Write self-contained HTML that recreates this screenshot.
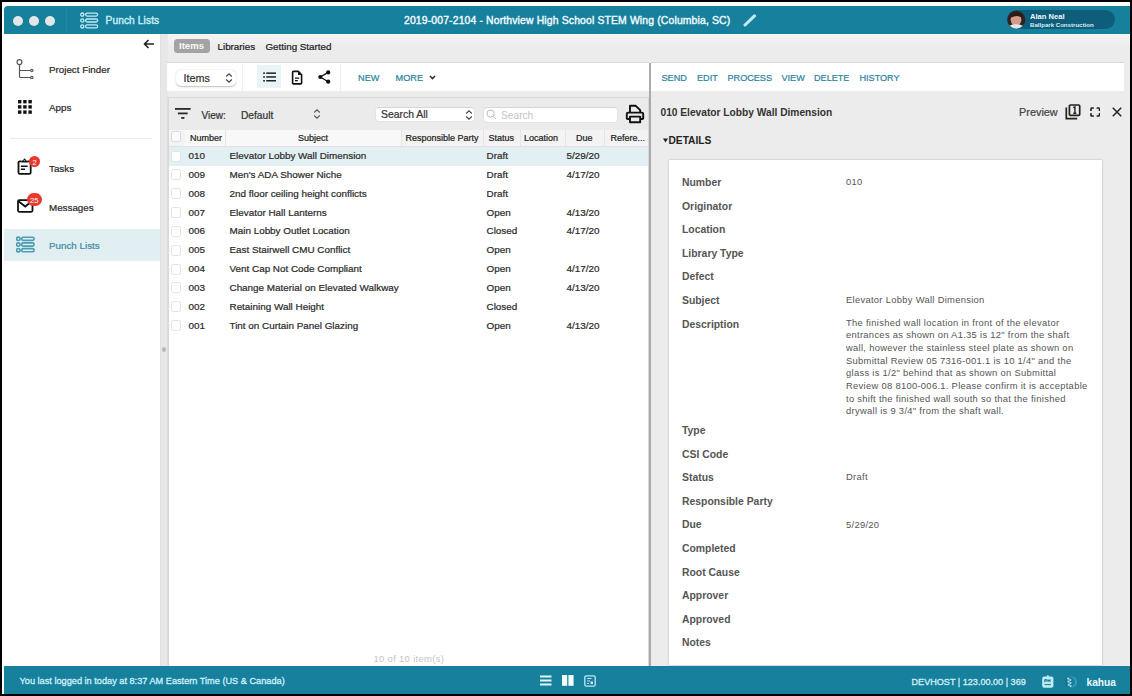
<!DOCTYPE html>
<html><head><meta charset="utf-8">
<style>
*{margin:0;padding:0;box-sizing:border-box}
html,body{width:1132px;height:696px;overflow:hidden;background:#000;font-family:"Liberation Sans",sans-serif;}
.a{position:absolute}
.t{position:absolute;white-space:nowrap;line-height:1;-webkit-text-stroke:0.22px}
.t.b{-webkit-text-stroke:0}
#win{position:absolute;left:2px;top:2px;width:1128px;height:692px;background:#fff;overflow:hidden}
#hdr{position:absolute;z-index:2;left:1.5px;top:4px;width:1126.5px;height:27.5px;background:#17809d;border-radius:4px 0 0 0}
#ftr{position:absolute;left:1.5px;top:664px;width:1126.5px;height:27.5px;background:#17809d}
#side{position:absolute;left:1.5px;top:31px;width:156px;height:633px;background:#fff}
#main{position:absolute;left:158px;top:31px;width:970px;height:633px;background:linear-gradient(#f6f6f6 0px,#ececec 14px,#ececec 100%)}
</style></head><body>
<div id="win">
  <div id="hdr">
    <div class="a" style="left:9.5px;top:9.5px;width:10px;height:10px;border-radius:50%;background:#dfe7e9"></div>
    <div class="a" style="left:25.3px;top:9.5px;width:10px;height:10px;border-radius:50%;background:#dfe7e9"></div>
    <div class="a" style="left:41px;top:9.5px;width:10px;height:10px;border-radius:50%;background:#dfe7e9"></div>
    <div class="a" style="left:62px;top:0;width:1px;height:27px;background:#1f8aa6"></div>
    <svg class="a" style="left:76.8px;top:5.5px" width="19" height="17" viewBox="0 0 19 17"><g fill="none" stroke="#bfeaf5" stroke-width="1.3"><circle cx="2.3" cy="2.6" r="1.6"/><rect x="5.6" y="1.1" width="12" height="3" rx="1.5"/><circle cx="2.3" cy="8.5" r="1.6"/><rect x="5.6" y="7" width="12" height="3" rx="1.5"/><circle cx="2.3" cy="14.4" r="1.6"/><rect x="5.6" y="12.9" width="12" height="3" rx="1.5"/></g></svg>
    <div class="t" style="left:102px;top:10px;font-size:10.2px;color:#c6eef8;letter-spacing:0.1px;-webkit-text-stroke:0.4px #c6eef8">Punch Lists</div>
    <div class="t" style="left:400.5px;top:10px;font-size:10.4px;color:#f0fafd;letter-spacing:0.15px;-webkit-text-stroke:0.4px #f0fafd">2019-007-2104 - Northview High School STEM Wing (Columbia, SC)</div>
    <svg class="a" style="left:739px;top:8px" width="14" height="13" viewBox="0 0 14 13"><path d="M2 11L11.5 1.8" stroke="#bfeaf5" stroke-width="3" stroke-linecap="round"/></svg>
    <div class="a" style="left:1003.5px;top:3.5px;width:108px;height:19.5px;border-radius:10px;background:#0e5d7b"></div>
    <svg class="a" style="left:1003.5px;top:3.5px" width="19" height="19.5" viewBox="0 0 19 19.5"><defs><clipPath id="av"><circle cx="9.3" cy="9.75" r="9"/></clipPath></defs><g clip-path="url(#av)"><rect width="19" height="19.5" fill="#2e211e"/><ellipse cx="9" cy="9.6" rx="5.4" ry="6.2" fill="#d39a86"/><path d="M3 5.5Q8 0.5 15.5 4.5L15 7.5Q10 4.5 4 7.5Z" fill="#2a1a16"/><ellipse cx="9" cy="19.2" rx="9.5" ry="5" fill="#dfe6ec"/></g></svg>
    <div class="t b" style="left:1026.5px;top:7px;font-size:7.6px;font-weight:bold;color:#eef8fb">Alan Neal</div>
    <div class="t b" style="left:1026.5px;top:16px;font-size:6.1px;font-weight:bold;color:#d8eef5">Ballpark Construction</div>
  </div>
  <div id="side">
    <svg class="a" style="left:139px;top:5.5px" width="12" height="10" viewBox="0 0 12 10"><path d="M11 5H1.5M5.5 1L1.5 5L5.5 9" fill="none" stroke="#222" stroke-width="1.6"/></svg>
    <svg class="a" style="left:12.5px;top:24.5px" width="19" height="21" viewBox="0 0 19 21"><g fill="none" stroke="#555" stroke-width="1.15"><circle cx="3.5" cy="4.1" r="2.5"/><path d="M3.5 6.6V18.8Q3.5 19.5 4.2 19.5H14.6M3.5 12.5H14.6"/><circle cx="15.8" cy="12.5" r="1.2"/><circle cx="15.8" cy="19.5" r="1.2"/></g></svg>
    <div class="t" style="left:45.5px;top:32px;font-size:9.8px;color:#2a2a2a">Project Finder</div>
    <svg class="a" style="left:14.5px;top:67px" width="14" height="14" viewBox="0 0 14 14"><g fill="#111"><rect x="0" y="0" width="3.4" height="3.4"/><rect x="5.2" y="0" width="3.4" height="3.4"/><rect x="10.4" y="0" width="3.4" height="3.4"/><rect x="0" y="5.2" width="3.4" height="3.4"/><rect x="5.2" y="5.2" width="3.4" height="3.4"/><rect x="10.4" y="5.2" width="3.4" height="3.4"/><rect x="0" y="10.4" width="3.4" height="3.4"/><rect x="5.2" y="10.4" width="3.4" height="3.4"/><rect x="10.4" y="10.4" width="3.4" height="3.4"/></g></svg>
    <div class="t" style="left:45.5px;top:70px;font-size:9.8px;color:#2a2a2a">Apps</div>
    <div class="a" style="left:6px;top:104.5px;width:142px;height:1px;background:#ececec"></div>
    <svg class="a" style="left:13.5px;top:125px" width="16" height="17" viewBox="0 0 16 17"><g fill="none" stroke="#111" stroke-width="1.8"><path d="M4.6 3.4H2.9Q1.5 3.4 1.5 4.8V14.4Q1.5 15.8 2.9 15.8H12.3Q13.7 15.8 13.7 14.4V4.8Q13.7 3.4 12.3 3.4H10.6"/><path d="M3.9 8.3H10.6M3.9 11.2H8" stroke-width="1.5"/></g><path d="M4.4 4.6V3.4Q4.4 2.4 5.4 2.4H6.2Q6.6 0.6 7.6 0.6Q8.6 0.6 9 2.4H9.8Q10.8 2.4 10.8 3.4V4.6Z" fill="#111"/><circle cx="7.6" cy="2.6" r="0.7" fill="#8aa"/></svg>
    <div class="a" style="left:25.6px;top:123px;width:11px;height:11px;border-radius:50%;background:#e8392f"></div>
    <div class="t" style="left:25.6px;top:126px;width:11px;text-align:center;font-size:7.6px;color:#fff;-webkit-text-stroke:0">2</div>
    <div class="t" style="left:45.5px;top:131px;font-size:9.8px;color:#2a2a2a">Tasks</div>
    <svg class="a" style="left:13.5px;top:166px" width="17" height="14" viewBox="0 0 17 14"><g fill="none" stroke="#111" stroke-width="1.8"><rect x="1" y="1.2" width="14.5" height="11.6" rx="1.2"/><path d="M1.2 2L8.2 7.5L15.3 2"/></g></svg>
    <div class="a" style="left:23.2px;top:160.3px;width:15.6px;height:13px;border-radius:7px;background:#e8392f"></div>
    <div class="t" style="left:23px;top:164px;width:15.6px;text-align:center;font-size:7.6px;color:#fff;-webkit-text-stroke:0">25</div>
    <div class="t" style="left:45.5px;top:170px;font-size:9.8px;color:#2a2a2a">Messages</div>
    <div class="a" style="left:0;top:195.5px;width:156px;height:32.5px;background:#e1eff3"></div>
    <svg class="a" style="left:12px;top:203px" width="19" height="17" viewBox="0 0 19 17"><g fill="none" stroke="#4c9cb3" stroke-width="1.6"><circle cx="2.3" cy="2.8" r="1.7"/><rect x="5.6" y="1.2" width="12.5" height="3.2" rx="1.6"/><circle cx="2.3" cy="8.5" r="1.7"/><rect x="5.6" y="6.9" width="12.5" height="3.2" rx="1.6"/><circle cx="2.3" cy="14.2" r="1.7"/><rect x="5.6" y="12.6" width="12.5" height="3.2" rx="1.6"/></g></svg>
    <div class="t" style="left:45.5px;top:208px;font-size:9.8px;color:#3f8ba1">Punch Lists</div>
  </div>
  <div id="main"></div>
  <div class="a" style="left:-2px;top:-2px;width:1132px;height:696px">
    <!-- splitter -->
    <div class="a" style="left:159.5px;top:33.5px;width:1px;height:632.5px;background:#e0e0e0"></div>
    <div class="a" style="left:160.5px;top:33.5px;width:7px;height:632.5px;background:#e7e7e7"></div>
    <div class="a" style="left:166.5px;top:97px;width:1px;height:569px;background:#dcdcdc"></div>
    <div class="a" style="left:161.5px;top:347px;width:4px;height:5px;border-radius:50%;background:#b8b8b8"></div>
    <!-- tabs -->
    <div class="a" style="left:173.5px;top:38.8px;width:36px;height:13.8px;border-radius:3.5px;background:#a3a3a3"></div>
    <div class="t b" style="left:179px;top:41px;font-size:9.6px;font-weight:bold;color:#f6f8f6">Items</div>
    <div class="t" style="left:217.5px;top:42px;font-size:9.8px;color:#222">Libraries</div>
    <div class="t" style="left:265.5px;top:42px;font-size:9.8px;color:#222">Getting Started</div>
    <!-- left toolbar -->
    <div class="a" style="left:167px;top:62px;width:482px;height:29px;background:#fff;border-top:1.5px solid #d9d9d9"></div>
    <div class="a" style="left:176px;top:69.5px;width:60px;height:16px;border-radius:5px;background:#fff;box-shadow:0 0.5px 1.5px rgba(0,0,0,0.25)"></div>
    <div class="t" style="left:183.5px;top:73px;font-size:10.8px;color:#333">Items</div>
    <svg class="a" style="left:225px;top:71.5px" width="8" height="12" viewBox="0 0 8 12"><path d="M1.2 4.5L4 1.8L6.8 4.5M1.2 7.5L4 10.2L6.8 7.5" fill="none" stroke="#444" stroke-width="1.2"/></svg>
    <div class="a" style="left:241.5px;top:63.5px;width:1px;height:27px;background:#efefef"></div>
    <div class="a" style="left:256.5px;top:64.5px;width:24.5px;height:23.5px;background:#e9f4f6"></div>
    <svg class="a" style="left:262.5px;top:72px" width="14" height="10" viewBox="0 0 14 10"><g fill="#222"><rect x="0.2" y="0.4" width="1.7" height="1.6"/><rect x="3.2" y="0.4" width="9.8" height="1.5"/><rect x="0.2" y="4.2" width="1.7" height="1.6"/><rect x="3.2" y="4.2" width="9.8" height="1.5"/><rect x="0.2" y="8" width="1.7" height="1.6"/><rect x="3.2" y="8" width="9.8" height="1.5"/></g></svg>
    <svg class="a" style="left:291px;top:69.5px" width="12" height="15" viewBox="0 0 12 15"><g fill="none" stroke="#111" stroke-width="1.6" stroke-linejoin="round"><path d="M1.6 2.4Q1.6 1.4 2.6 1.4H7.3L10.6 4.8V12.9Q10.6 13.9 9.6 13.9H2.6Q1.6 13.9 1.6 12.9Z"/><path d="M4 8.1H8.2M4 10.6H6.8" stroke-width="1.3"/></g><path d="M7 1.4L10.6 5H7Z" fill="#111"/></svg>
    <svg class="a" style="left:318px;top:70px" width="13" height="14" viewBox="0 0 13 14"><g fill="#111"><circle cx="10.2" cy="2.4" r="2.1"/><circle cx="2.3" cy="7" r="2.1"/><circle cx="10.2" cy="11.7" r="2.1"/></g><path d="M10.2 2.4L2.3 7L10.2 11.7" fill="none" stroke="#111" stroke-width="1.3"/></svg>
    <div class="a" style="left:340px;top:63.5px;width:1px;height:27px;background:#efefef"></div>
    <div class="t" style="left:358px;top:74px;font-size:9.2px;color:#2b849d">NEW</div>
    <div class="t" style="left:395.5px;top:74px;font-size:9.2px;color:#2b849d">MORE</div>
    <svg class="a" style="left:429px;top:75px" width="7" height="5" viewBox="0 0 7 5"><path d="M1 1L3.5 3.6L6 1" fill="none" stroke="#333" stroke-width="1.6"/></svg>
    <!-- divider -->
    <div class="a" style="left:648.8px;top:63px;width:1.8px;height:603px;background:#aaaaaa"></div>
    <!-- right toolbar -->
    <div class="a" style="left:651px;top:62px;width:473px;height:29px;background:#fff;border-top:1.5px solid #d9d9d9"></div>
    <div class="t" style="left:661.5px;top:74px;font-size:9.1px;color:#2b849d">SEND</div>
    <div class="t" style="left:697px;top:74px;font-size:9.1px;color:#2b849d">EDIT</div>
    <div class="t" style="left:727.5px;top:74px;font-size:9.1px;color:#2b849d">PROCESS</div>
    <div class="t" style="left:781.5px;top:74px;font-size:9.1px;color:#2b849d">VIEW</div>
    <div class="t" style="left:814px;top:74px;font-size:9.1px;color:#2b849d">DELETE</div>
    <div class="t" style="left:859.5px;top:74px;font-size:9.1px;color:#2b849d">HISTORY</div>
    <!-- grid panel -->
    <div class="a" style="left:167.5px;top:97px;width:481px;height:569px;background:#fff;border:1px solid #d8d8d8;border-bottom:none"></div>
    <div class="a" style="left:168.5px;top:98px;width:479.5px;height:31.5px;background:#ebebeb"></div>
    <svg class="a" style="left:175px;top:107.8px" width="16" height="11" viewBox="0 0 16 11"><g fill="#2a2a2a"><rect x="0" y="0" width="15.6" height="1.8"/><rect x="2.9" y="4.5" width="9.8" height="1.8"/><rect x="6.2" y="9" width="3.2" height="1.8"/></g></svg>
    <svg class="a" style="left:312.5px;top:108px" width="8" height="12" viewBox="0 0 8 12"><path d="M1.2 4.5L4 1.8L6.8 4.5M1.2 7.5L4 10.2L6.8 7.5" fill="none" stroke="#555" stroke-width="1.1"/></svg>
    <div class="a" style="left:374.5px;top:106.5px;width:100px;height:15.5px;border-radius:4px;background:#fff;border:1px solid #e4e4e4;border-top-color:#d6d6d6"></div>
    <svg class="a" style="left:465px;top:108.5px" width="8" height="12" viewBox="0 0 8 12"><path d="M1.2 4.5L4 1.8L6.8 4.5M1.2 7.5L4 10.2L6.8 7.5" fill="none" stroke="#444" stroke-width="1.1"/></svg>
    <div class="a" style="left:482.5px;top:106.5px;width:135.5px;height:16px;border-radius:4px;background:#fff;border:1px solid #e2e2e2;border-top-color:#d6d6d6"></div>
    <svg class="a" style="left:486px;top:109px" width="11" height="11" viewBox="0 0 11 11"><g fill="none" stroke="#bbb" stroke-width="1"><circle cx="4.6" cy="4.6" r="3.6"/><path d="M7.2 7.2L10 10"/></g></svg>
    <svg class="a" style="left:624.5px;top:103.5px" width="20" height="20" viewBox="0 0 20 20"><g fill="none" stroke="#111" stroke-width="1.9" stroke-linejoin="round"><path d="M5 8.6V1.8H10.8L15.2 6.2V8.6"/><path d="M4.4 15H2.6Q1.8 15 1.8 14.2V10Q1.8 8.6 3.2 8.6H16.8Q18.2 8.6 18.2 10V14.2Q18.2 15 17.4 15H15.6"/><rect x="5" y="12.6" width="10.2" height="5.6"/></g></svg>
    <!-- column header -->
    <div class="a" style="left:168.5px;top:129.5px;width:479.5px;height:17px;background:#f3f3f3;border-bottom:1px solid #e2e2e2"></div>
    <div class="a" style="left:185px;top:130px;width:40px;height:16px;background:#f8f8f8"></div>
    <div class="a" style="left:225.5px;top:130px;width:175px;height:16px;background:#f8f8f8"></div>
    <div class="a" style="left:171px;top:131px;width:10px;height:11px;border:1px solid #dcdcdc;border-radius:2px;background:#fafafa"></div>
    <div class="t" style="left:201.5px;top:111.00px;font-size:10px;color:#333">View:</div>
    <div class="t" style="left:241px;top:111.00px;font-size:10.2px;color:#333">Default</div>
    <div class="t" style="left:381px;top:110.00px;font-size:10.4px;color:#333">Search All</div>
    <div class="t" style="left:501px;top:111.00px;font-size:10.2px;color:#c4c4c4;-webkit-text-stroke:0">Search</div>
    <div class="t" style="left:190px;top:134.00px;font-size:9px;color:#222">Number</div>
    <div class="t" style="left:298px;top:134.00px;font-size:9px;color:#222">Subject</div>
    <div class="t" style="left:405.5px;top:134.00px;font-size:9px;color:#222">Responsible Party</div>
    <div class="t" style="left:488.5px;top:134.00px;font-size:9px;color:#222">Status</div>
    <div class="t" style="left:524px;top:134.00px;font-size:9px;color:#222">Location</div>
    <div class="t" style="left:576px;top:134.00px;font-size:9px;color:#222">Due</div>
    <div class="t" style="left:610.5px;top:134.00px;font-size:9px;color:#222">Refere...</div>
    <div class="a" style="left:225px;top:130px;width:1px;height:16px;background:#e4e4e4"></div>
    <div class="a" style="left:400.5px;top:130px;width:1px;height:16px;background:#e4e4e4"></div>
    <div class="a" style="left:482.5px;top:130px;width:1px;height:16px;background:#e4e4e4"></div>
    <div class="a" style="left:519.5px;top:130px;width:1px;height:16px;background:#e4e4e4"></div>
    <div class="a" style="left:564.5px;top:130px;width:1px;height:16px;background:#e4e4e4"></div>
    <div class="a" style="left:604px;top:130px;width:1px;height:16px;background:#e4e4e4"></div>
    <div class="a" style="left:168.5px;top:147px;width:479.5px;height:18.5px;background:#e3f0f3"></div>
    <div class="a" style="left:171px;top:150.60px;width:10px;height:11px;border:1px solid #e2e2e2;border-radius:2.5px;background:#fff"></div>
    <div class="t" style="left:188.5px;top:151.00px;font-size:9.9px;color:#2b2b2b">010</div>
    <div class="t" style="left:229.5px;top:151.00px;font-size:9.9px;color:#2b2b2b">Elevator Lobby Wall Dimension</div>
    <div class="t" style="left:486.5px;top:151.00px;font-size:9.9px;color:#2b2b2b">Draft</div>
    <div class="t" style="left:566.5px;top:151.00px;font-size:9.9px;color:#2b2b2b">5/29/20</div>
    <div class="a" style="left:171px;top:169.44px;width:10px;height:11px;border:1px solid #e2e2e2;border-radius:2.5px;background:#fff"></div>
    <div class="t" style="left:188.5px;top:170.00px;font-size:9.9px;color:#2b2b2b">009</div>
    <div class="t" style="left:229.5px;top:170.00px;font-size:9.9px;color:#2b2b2b">Men's ADA Shower Niche</div>
    <div class="t" style="left:486.5px;top:170.00px;font-size:9.9px;color:#2b2b2b">Draft</div>
    <div class="t" style="left:566.5px;top:170.00px;font-size:9.9px;color:#2b2b2b">4/17/20</div>
    <div class="a" style="left:171px;top:188.28px;width:10px;height:11px;border:1px solid #e2e2e2;border-radius:2.5px;background:#fff"></div>
    <div class="t" style="left:188.5px;top:189.00px;font-size:9.9px;color:#2b2b2b">008</div>
    <div class="t" style="left:229.5px;top:189.00px;font-size:9.9px;color:#2b2b2b">2nd floor ceiling height conflicts</div>
    <div class="t" style="left:486.5px;top:189.00px;font-size:9.9px;color:#2b2b2b">Draft</div>
    <div class="a" style="left:171px;top:207.12px;width:10px;height:11px;border:1px solid #e2e2e2;border-radius:2.5px;background:#fff"></div>
    <div class="t" style="left:188.5px;top:208.00px;font-size:9.9px;color:#2b2b2b">007</div>
    <div class="t" style="left:229.5px;top:208.00px;font-size:9.9px;color:#2b2b2b">Elevator Hall Lanterns</div>
    <div class="t" style="left:486.5px;top:208.00px;font-size:9.9px;color:#2b2b2b">Open</div>
    <div class="t" style="left:566.5px;top:208.00px;font-size:9.9px;color:#2b2b2b">4/13/20</div>
    <div class="a" style="left:171px;top:225.96px;width:10px;height:11px;border:1px solid #e2e2e2;border-radius:2.5px;background:#fff"></div>
    <div class="t" style="left:188.5px;top:226.00px;font-size:9.9px;color:#2b2b2b">006</div>
    <div class="t" style="left:229.5px;top:226.00px;font-size:9.9px;color:#2b2b2b">Main Lobby Outlet Location</div>
    <div class="t" style="left:486.5px;top:226.00px;font-size:9.9px;color:#2b2b2b">Closed</div>
    <div class="t" style="left:566.5px;top:226.00px;font-size:9.9px;color:#2b2b2b">4/17/20</div>
    <div class="a" style="left:171px;top:244.80px;width:10px;height:11px;border:1px solid #e2e2e2;border-radius:2.5px;background:#fff"></div>
    <div class="t" style="left:188.5px;top:245.00px;font-size:9.9px;color:#2b2b2b">005</div>
    <div class="t" style="left:229.5px;top:245.00px;font-size:9.9px;color:#2b2b2b">East Stairwell CMU Conflict</div>
    <div class="t" style="left:486.5px;top:245.00px;font-size:9.9px;color:#2b2b2b">Open</div>
    <div class="a" style="left:171px;top:263.64px;width:10px;height:11px;border:1px solid #e2e2e2;border-radius:2.5px;background:#fff"></div>
    <div class="t" style="left:188.5px;top:264.00px;font-size:9.9px;color:#2b2b2b">004</div>
    <div class="t" style="left:229.5px;top:264.00px;font-size:9.9px;color:#2b2b2b">Vent Cap Not Code Compliant</div>
    <div class="t" style="left:486.5px;top:264.00px;font-size:9.9px;color:#2b2b2b">Open</div>
    <div class="t" style="left:566.5px;top:264.00px;font-size:9.9px;color:#2b2b2b">4/17/20</div>
    <div class="a" style="left:171px;top:282.48px;width:10px;height:11px;border:1px solid #e2e2e2;border-radius:2.5px;background:#fff"></div>
    <div class="t" style="left:188.5px;top:283.00px;font-size:9.9px;color:#2b2b2b">003</div>
    <div class="t" style="left:229.5px;top:283.00px;font-size:9.9px;color:#2b2b2b">Change Material on Elevated Walkway</div>
    <div class="t" style="left:486.5px;top:283.00px;font-size:9.9px;color:#2b2b2b">Open</div>
    <div class="t" style="left:566.5px;top:283.00px;font-size:9.9px;color:#2b2b2b">4/13/20</div>
    <div class="a" style="left:171px;top:301.32px;width:10px;height:11px;border:1px solid #e2e2e2;border-radius:2.5px;background:#fff"></div>
    <div class="t" style="left:188.5px;top:302.00px;font-size:9.9px;color:#2b2b2b">002</div>
    <div class="t" style="left:229.5px;top:302.00px;font-size:9.9px;color:#2b2b2b">Retaining Wall Height</div>
    <div class="t" style="left:486.5px;top:302.00px;font-size:9.9px;color:#2b2b2b">Closed</div>
    <div class="a" style="left:171px;top:320.16px;width:10px;height:11px;border:1px solid #e2e2e2;border-radius:2.5px;background:#fff"></div>
    <div class="t" style="left:188.5px;top:321.00px;font-size:9.9px;color:#2b2b2b">001</div>
    <div class="t" style="left:229.5px;top:321.00px;font-size:9.9px;color:#2b2b2b">Tint on Curtain Panel Glazing</div>
    <div class="t" style="left:486.5px;top:321.00px;font-size:9.9px;color:#2b2b2b">Open</div>
    <div class="t" style="left:566.5px;top:321.00px;font-size:9.9px;color:#2b2b2b">4/13/20</div>
    <div class="t" style="left:373.5px;top:654.00px;font-size:9.4px;color:#c4c4c4;letter-spacing:0.35px;-webkit-text-stroke:0">10 of 10 item(s)</div>
<!-- right panel -->
    <div class="a" style="left:651px;top:91px;width:479px;height:575px;background:#ececec"></div>
    <svg class="a" style="left:1064.5px;top:104px" width="16" height="16" viewBox="0 0 16 16"><g fill="none" stroke="#222" stroke-width="1.7"><rect x="4.4" y="1" width="10.3" height="10.3" rx="1"/><path d="M1.3 3.6V14.7H12.2"/></g><path d="M8.3 3.6L9.9 2.8V9.2M8.3 9.2H11.3" fill="none" stroke="#222" stroke-width="1.4"/></svg>
    <svg class="a" style="left:1089.5px;top:106.5px" width="10.5" height="10" viewBox="0 0 10.5 10"><g fill="none" stroke="#222" stroke-width="1.7" stroke-linecap="round"><path d="M1 3.2V1.8Q1 1 1.8 1H3.2M7.3 1H8.7Q9.5 1 9.5 1.8V3.2M9.5 6.8V8.2Q9.5 9 8.7 9H7.3M3.2 9H1.8Q1 9 1 8.2V6.8"/></g></svg>
    <svg class="a" style="left:1111.5px;top:107px" width="10" height="10" viewBox="0 0 10 10"><path d="M0.8 0.8L9.2 9.2M9.2 0.8L0.8 9.2" fill="none" stroke="#222" stroke-width="1.5"/></svg>
    <svg class="a" style="left:662.5px;top:137.5px" width="5" height="5" viewBox="0 0 5 5"><path d="M0 0.5H5L2.5 4.6Z" fill="#222"/></svg>
    <div class="a" style="left:668.5px;top:159.5px;width:433px;height:505px;background:#fff;box-shadow:0 0 2px rgba(0,0,0,0.25)"></div>
    <div class="t b" style="left:660.5px;top:108.00px;font-size:10.2px;color:#333;font-weight:bold">010 Elevator Lobby Wall Dimension</div>
    <div class="t" style="left:1019px;top:107.00px;font-size:10.9px;color:#444">Preview</div>
    <div class="t b" style="left:668.5px;top:136.00px;font-size:10.2px;color:#222;font-weight:bold">DETAILS</div>
    <div class="t b" style="left:682px;top:178.00px;font-size:10.4px;color:#555;font-weight:bold">Number</div>
    <div class="t b" style="left:682px;top:202.00px;font-size:10.4px;color:#555;font-weight:bold">Originator</div>
    <div class="t b" style="left:682px;top:225.00px;font-size:10.4px;color:#555;font-weight:bold">Location</div>
    <div class="t b" style="left:682px;top:249.00px;font-size:10.4px;color:#555;font-weight:bold">Library Type</div>
    <div class="t b" style="left:682px;top:272.00px;font-size:10.4px;color:#555;font-weight:bold">Defect</div>
    <div class="t b" style="left:682px;top:296.00px;font-size:10.4px;color:#555;font-weight:bold">Subject</div>
    <div class="t b" style="left:682px;top:320.00px;font-size:10.4px;color:#555;font-weight:bold">Description</div>
    <div class="t b" style="left:682px;top:426.00px;font-size:10.4px;color:#555;font-weight:bold">Type</div>
    <div class="t b" style="left:682px;top:450.00px;font-size:10.4px;color:#555;font-weight:bold">CSI Code</div>
    <div class="t b" style="left:682px;top:473.00px;font-size:10.4px;color:#555;font-weight:bold">Status</div>
    <div class="t b" style="left:682px;top:497.00px;font-size:10.4px;color:#555;font-weight:bold">Responsible Party</div>
    <div class="t b" style="left:682px;top:520.00px;font-size:10.4px;color:#555;font-weight:bold">Due</div>
    <div class="t b" style="left:682px;top:544.00px;font-size:10.4px;color:#555;font-weight:bold">Completed</div>
    <div class="t b" style="left:682px;top:568.00px;font-size:10.4px;color:#555;font-weight:bold">Root Cause</div>
    <div class="t b" style="left:682px;top:591.00px;font-size:10.4px;color:#555;font-weight:bold">Approver</div>
    <div class="t b" style="left:682px;top:615.00px;font-size:10.4px;color:#555;font-weight:bold">Approved</div>
    <div class="t b" style="left:682px;top:638.00px;font-size:10.4px;color:#555;font-weight:bold">Notes</div>
    <div class="t" style="left:846px;top:177.00px;font-size:9.4px;color:#555;-webkit-text-stroke:0;letter-spacing:0.3px">010</div>
    <div class="t" style="left:846px;top:295.00px;font-size:9.4px;color:#555;-webkit-text-stroke:0;letter-spacing:0.3px">Elevator Lobby Wall Dimension</div>
    <div class="t" style="left:846px;top:472.00px;font-size:9.4px;color:#555;-webkit-text-stroke:0;letter-spacing:0.3px">Draft</div>
    <div class="t" style="left:846px;top:520.00px;font-size:9.4px;color:#555;-webkit-text-stroke:0;letter-spacing:0.3px">5/29/20</div>
    <div class="t" style="left:846px;top:318.00px;font-size:9.4px;color:#555;-webkit-text-stroke:0;letter-spacing:0.3px">The finished wall location in front of the elevator</div>
    <div class="t" style="left:846px;top:330.00px;font-size:9.4px;color:#555;-webkit-text-stroke:0;letter-spacing:0.3px">entrances as shown on A1.35 is 12&quot; from the shaft</div>
    <div class="t" style="left:846px;top:343.00px;font-size:9.4px;color:#555;-webkit-text-stroke:0;letter-spacing:0.3px">wall, however the stainless steel plate as shown on</div>
    <div class="t" style="left:846px;top:356.00px;font-size:9.4px;color:#555;-webkit-text-stroke:0;letter-spacing:0.3px">Submittal Review 05 7316-001.1 is 10 1/4&quot; and the</div>
    <div class="t" style="left:846px;top:368.00px;font-size:9.4px;color:#555;-webkit-text-stroke:0;letter-spacing:0.3px">glass is 1/2&quot; behind that as shown on Submittal</div>
    <div class="t" style="left:846px;top:381.00px;font-size:9.4px;color:#555;-webkit-text-stroke:0;letter-spacing:0.3px">Review 08 8100-006.1. Please confirm it is acceptable</div>
    <div class="t" style="left:846px;top:394.00px;font-size:9.4px;color:#555;-webkit-text-stroke:0;letter-spacing:0.3px">to shift the finished wall south so that the finished</div>
    <div class="t" style="left:846px;top:406.00px;font-size:9.4px;color:#555;-webkit-text-stroke:0;letter-spacing:0.3px">drywall is 9 3/4&quot; from the shaft wall.</div>

    
  </div>
  <div id="ftr">
    <div class="t" style="left:16px;top:11px;font-size:9.2px;color:#cdf0f9;-webkit-text-stroke:0.3px #cdf0f9">You last logged in today at 8:37 AM Eastern Time (US &amp; Canada)</div>
    <svg class="a" style="left:536.5px;top:9px" width="12" height="11" viewBox="0 0 12 11"><g fill="#e6f7fb"><rect x="0" y="0.5" width="11.5" height="2"/><rect x="0" y="4.5" width="11.5" height="2"/><rect x="0" y="8.5" width="11.5" height="2"/></g></svg>
    <svg class="a" style="left:558.5px;top:9px" width="12" height="11" viewBox="0 0 12 11"><g fill="#f2fbfd"><rect x="0" y="0" width="5.2" height="10.8"/><rect x="6.4" y="0" width="5.2" height="10.8"/></g></svg>
    <svg class="a" style="left:580px;top:8.5px" width="12" height="12" viewBox="0 0 12 12"><g fill="none" stroke="#bfeaf5" stroke-width="1.3"><rect x="0.8" y="0.8" width="10.4" height="10.4" rx="1.5"/><path d="M3.2 3.5H7.5M3.2 6H6M3.2 8.5H5" stroke-width="1.1"/></g><rect x="6.5" y="6.5" width="2.5" height="2.5" fill="#bfeaf5"/></svg>
    <div class="t" style="left:908px;top:12px;font-size:9.1px;color:#d2f0f8;-webkit-text-stroke:0.3px #d2f0f8">DEVHOST | 123.00.00 | 369</div>
    <svg class="a" style="left:1038.5px;top:8.5px" width="12" height="13" viewBox="0 0 12 13"><rect x="0.2" y="1.4" width="11.2" height="11.4" rx="2" fill="#bdedf8"/><path d="M4.8 0.4H6.8V2H4.8Z" fill="#bdedf8"/><path d="M2.8 7.2V4.6H4.2Q5 4.6 5 5.3Q5 6 4.2 6H2.8M6 7.2V4.6L7 6L8 4.6V7.2M2.6 9.6H9" fill="none" stroke="#1f6f86" stroke-width="1"/></svg>
    <svg class="a" style="left:1060.5px;top:8.5px" width="14" height="14" viewBox="0 0 14 14"><defs><linearGradient id="kg" x1="0" y1="0" x2="1" y2="0"><stop offset="0" stop-color="#1a6f8a"/><stop offset="1" stop-color="#3aa2bf"/></linearGradient></defs><circle cx="7" cy="7" r="5" fill="none" stroke="url(#kg)" stroke-width="2"/><g fill="#a9e3f3"><circle cx="4.2" cy="3.6" r="1.1"/><circle cx="6.2" cy="5" r="1.1"/><circle cx="4.4" cy="6.6" r="1.1"/><circle cx="6.4" cy="8" r="1.1"/><circle cx="4.8" cy="9.8" r="1.1"/><circle cx="6.6" cy="11" r="1"/></g></svg>
    <div class="t b" style="left:1083px;top:12px;font-size:10.2px;font-weight:bold;color:#eaf8fc">kahua</div>
  </div>
</div>
</body></html>
